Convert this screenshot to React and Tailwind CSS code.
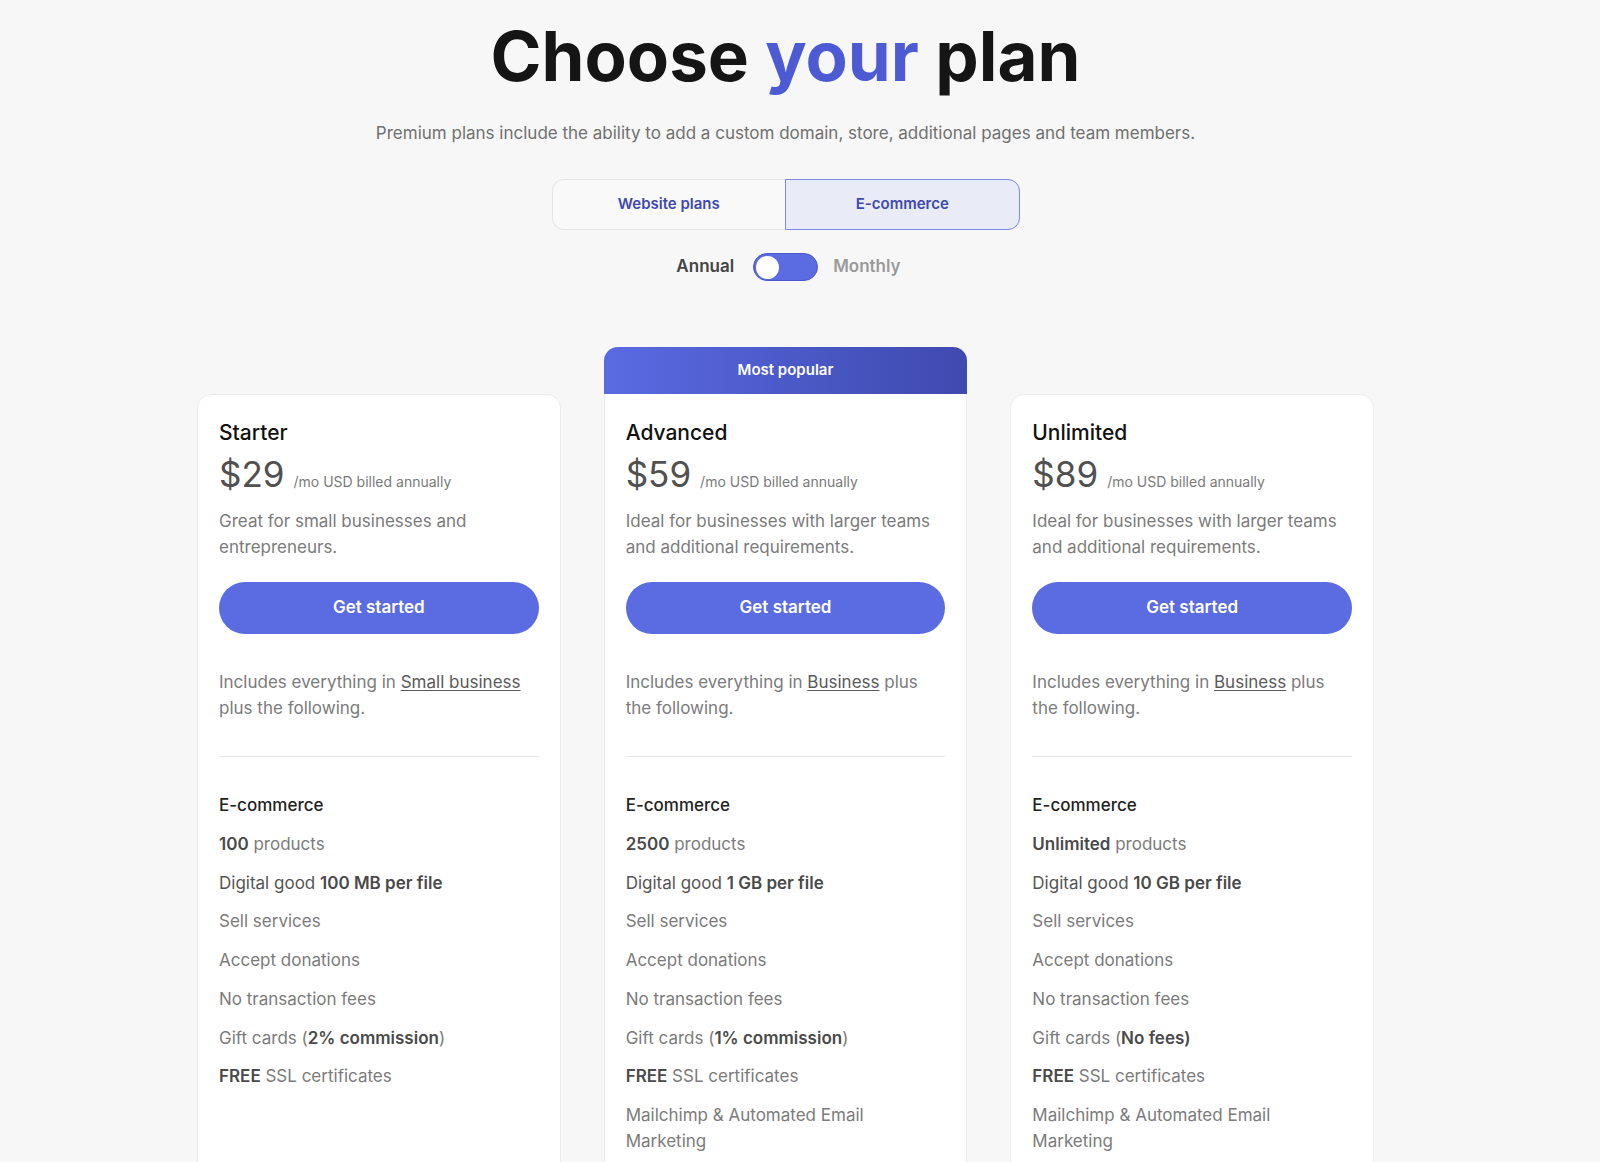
import { useState } from 'react';

const plans = [
  {
    name: 'Starter',
    price: '$29',
    desc: 'Great for small businesses and entrepreneurs.',
    base: 'Small business',
    products: '100',
    digital: '100 MB per file',
    gift: '2% commission',
    giftParen: true,
    mailchimp: false,
  },
  {
    name: 'Advanced',
    price: '$59',
    desc: 'Ideal for businesses with larger teams and additional requirements.',
    base: 'Business',
    products: '2500',
    digital: '1 GB per file',
    gift: '1% commission',
    giftParen: true,
    mailchimp: true,
    popular: true,
  },
  {
    name: 'Unlimited',
    price: '$89',
    desc: 'Ideal for businesses with larger teams and additional requirements.',
    base: 'Business',
    products: 'Unlimited',
    digital: '10 GB per file',
    gift: 'No fees)',
    giftParen: false,
    mailchimp: true,
  },
];

function Feature({ children }) {
  return <li className="text-[17px] leading-[26px] text-[#7b7b7b]">{children}</li>;
}

function B({ children }) {
  return <span className="font-semibold text-[#4a4a4a]">{children}</span>;
}

function PlanCard({ p }) {
  return (
    <div className="relative">
      {p.popular && (
        <div className="absolute left-0 right-0 -top-[47px] h-[47px] rounded-t-[14px] bg-gradient-to-r from-[#5a6ae2] to-[#3e4aaf] flex items-center justify-center text-white text-[15px] font-semibold">
          Most popular
        </div>
      )}
      <div className={`h-full bg-white border border-[#ececec] px-[21px] pb-[40px] ${p.popular ? 'rounded-b-[14px] border-t-0 pt-[25px]' : 'rounded-[14px] pt-[24px]'}`}>
        <div className="text-[21px] leading-[28px] font-medium text-[#111]">{p.name}</div>
        <div className="mt-[9px] flex items-baseline gap-[9px]">
          <span className="text-[35px] leading-[36px] text-[#505050]">{p.price}</span>
          <span className="text-[14px] text-[#7a7a7a]">/mo USD billed annually</span>
        </div>
        <p className="mt-[16px] text-[17px] leading-[26px] text-[#7b7b7b]">{p.desc}</p>
        <button type="button" className="mt-[22px] w-full h-[52px] rounded-full bg-[#5b6be1] text-white text-[17px] font-semibold">
          Get started
        </button>
        <p className="mt-[35px] text-[17px] leading-[26px] text-[#7b7b7b]">
          Includes everything in <span className="underline underline-offset-2 text-[#5a5a5a]">{p.base}</span> plus the following.
        </p>
        <div className="mt-[35px] h-px bg-[#e6e6e6]" />
        <ul className="mt-[35px] flex flex-col gap-[12.75px]">
          <li className="text-[17px] leading-[26px] font-medium text-[#222]">E-commerce</li>
          <Feature><B>{p.products}</B> products</Feature>
          <Feature><span className="text-[#555]">Digital good</span> <B>{p.digital}</B></Feature>
          <Feature>Sell services</Feature>
          <Feature>Accept donations</Feature>
          <Feature>No transaction fees</Feature>
          <Feature>
            Gift cards (<B>{p.gift}</B>{p.giftParen ? ')' : ''}
          </Feature>
          <Feature><B>FREE</B> SSL certificates</Feature>
          {p.mailchimp && <Feature>Mailchimp &amp; Automated Email Marketing</Feature>}
        </ul>
      </div>
    </div>
  );
}

export default function App() {
  const [tab, setTab] = useState('ecom');
  return (
    <div className="min-h-screen bg-[#f7f7f7] font-['Inter','Liberation_Sans',sans-serif]">
      <div className="w-[1571px] flex flex-col items-center pt-[22px] pb-[20px]">
        <h1 className="text-[69px] leading-[69px] font-bold text-[#151515]">
          Choose <span className="text-[#4c5bd4]">your</span> plan
        </h1>
        <p className="mt-[29px] text-[17px] leading-[26px] text-[#707070]">
          Premium plans include the ability to add a custom domain, store, additional pages and team members.
        </p>
        <div className="mt-[33px] flex w-[468px] h-[51px]">
          <button
            type="button"
            onClick={() => setTab('web')}
            className={`flex-1 rounded-l-[12px] text-[15px] font-semibold text-[#3e49b0] ${tab === 'web' ? 'bg-[#e9ebf7] border border-[#7d88e8] rounded-r-[12px]' : 'border border-r-0 border-[#e5e5e5] bg-[#f9f9f9]'}`}
          >
            Website plans
          </button>
          <button
            type="button"
            onClick={() => setTab('ecom')}
            className={`flex-1 rounded-r-[12px] text-[15px] font-semibold text-[#3e49b0] ${tab === 'ecom' ? 'bg-[#e9ebf7] border border-[#7d88e8]' : 'border border-l-0 border-[#e5e5e5] bg-[#f9f9f9]'}`}
          >
            E-commerce
          </button>
        </div>
        <div className="mt-[23px] pl-[6px] flex items-center">
          <span className="text-[17px] font-semibold text-[#444]">Annual</span>
          <div className="ml-[19px] w-[65px] h-[28px] rounded-full bg-[#5b6be1] border border-[#4a59cf] flex items-center px-[2px]">
            <div className="w-[23px] h-[23px] rounded-full bg-white" />
          </div>
          <span className="ml-[15px] text-[17px] font-semibold text-[#9a9a9a]">Monthly</span>
        </div>
        <div className="mt-[113px] grid grid-cols-3 gap-[43px] w-[1177px]">
          {plans.map((p) => (
            <PlanCard key={p.name} p={p} />
          ))}
        </div>
      </div>
    </div>
  );
}
